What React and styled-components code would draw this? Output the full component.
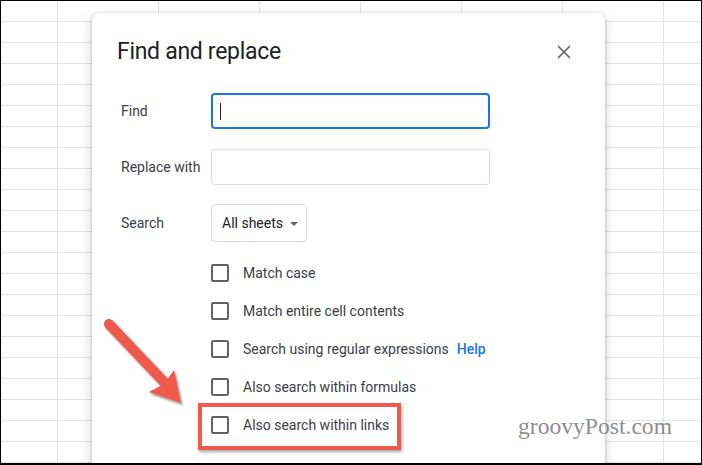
import React from 'react'
import styled, { createGlobalStyle } from 'styled-components'

const GlobalStyle = createGlobalStyle`
  html, body {
    margin: 0;
    padding: 0;
    background: #fff;
  }
  body {
    font-family: Roboto, "Liberation Sans", Arial, sans-serif;
  }
`

const Sheet = styled.div`
  position: relative;
  width: 702px;
  height: 465px;
  box-sizing: border-box;
  border: 1px solid #000;
  border-bottom-width: 2px;
  overflow: hidden;
  background-color: #fff;
  background-image: linear-gradient(#e3e3e3 1px, transparent 1px),
    linear-gradient(90deg, #e3e3e3 1px, transparent 1px);
  background-size: 101px 21px;
  background-position: 56px 20px;
`

const Dialog = styled.section`
  position: absolute;
  left: 91px;
  top: 12px;
  width: 513px;
  bottom: -20px;
  box-sizing: border-box;
  padding: 23px 25px 0 25px;
  background: #fff;
  border-radius: 8px;
  box-shadow: 0 1px 3px rgba(60, 64, 67, 0.3), 0 4px 8px 3px rgba(60, 64, 67, 0.15);
`

const Header = styled.header`
  display: flex;
  align-items: center;
  justify-content: space-between;
  height: 32px;
`

const Title = styled.h1`
  margin: 0;
  font-size: 23px;
  line-height: 32px;
  font-weight: 400;
  letter-spacing: -0.3px;
  color: #202124;
`

const CloseButton = styled.button`
  width: 32px;
  height: 32px;
  padding: 0;
  border: 0;
  background: transparent;
  display: flex;
  align-items: center;
  justify-content: center;
  color: #5f6368;
`

const Form = styled.div`
  margin-top: 25px;
  padding-left: 4px;
`

const FieldRow = styled.div`
  display: flex;
  align-items: center;
  height: 36px;

  & + & {
    margin-top: 20px;
  }
`

const Label = styled.label`
  width: 90px;
  flex: none;
  font-size: 14px;
  color: #3c4043;
`

const TextBox = styled.div`
  width: 279px;
  height: 36px;
  box-sizing: border-box;
  display: flex;
  align-items: center;
  padding-left: ${p => (p.$focused ? 7 : 8)}px;
  border: ${p => (p.$focused ? '2px solid #1a73e8' : '1px solid #dadce0')};
  border-radius: 4px;
  background: #fff;
`

const Caret = styled.span`
  width: 1px;
  height: 17px;
  background: #202124;
`

const Select = styled.div`
  height: 38px;
  box-sizing: border-box;
  display: inline-flex;
  align-items: center;
  gap: 7px;
  padding: 0 8px 0 10px;
  border: 1px solid #dadce0;
  border-radius: 4px;
  font-size: 14px;
  color: #202124;
`

const DropArrow = styled.span`
  width: 0;
  height: 0;
  border-left: 4px solid transparent;
  border-right: 4px solid transparent;
  border-top: 4px solid #5f6368;
  margin-top: 1px;
`

const Options = styled.ul`
  list-style: none;
  margin: 13px 0 0 90px;
  padding: 0;
`

const Option = styled.li`
  display: flex;
  align-items: center;
  height: 38px;
  gap: 14px;
  font-size: 14px;
  color: #3c4043;
`

const Box = styled.span`
  width: 18px;
  height: 18px;
  box-sizing: border-box;
  border: 2px solid #5f6368;
  border-radius: 2px;
  flex: none;
`

const HelpLink = styled.a`
  margin-left: -6px;
  color: #1a73e8;
  font-weight: 500;
  text-decoration: none;
`

const Highlight = styled.div`
  position: absolute;
  left: 197px;
  top: 402px;
  width: 203px;
  height: 47px;
  box-sizing: border-box;
  border: 4px solid #f05a4b;
  box-shadow: 1px 2px 3px rgba(0, 0, 0, 0.35);
`

const Pointer = styled.svg`
  position: absolute;
  left: 95px;
  top: 310px;
  overflow: visible;
`

const Watermark = styled.div`
  position: absolute;
  left: 517px;
  top: 413px;
  font-family: "Liberation Serif", "Times New Roman", serif;
  font-size: 23.6px;
  line-height: 24px;
  color: rgba(110, 110, 110, 0.8);
`

const options = [
  'Match case',
  'Match entire cell contents',
  'Search using regular expressions',
  'Also search within formulas',
  'Also search within links',
]

export default function App() {
  return (
    <>
      <GlobalStyle />
      <Sheet>
        <Dialog>
          <Header>
            <Title>Find and replace</Title>
            <CloseButton aria-label="Close">
              <svg width="14" height="14" viewBox="0 0 14 14">
                <path d="M1 1 L13 13 M13 1 L1 13" stroke="currentColor" strokeWidth="1.6" fill="none" />
              </svg>
            </CloseButton>
          </Header>
          <Form>
            <FieldRow>
              <Label>Find</Label>
              <TextBox $focused>
                <Caret />
              </TextBox>
            </FieldRow>
            <FieldRow>
              <Label>Replace with</Label>
              <TextBox />
            </FieldRow>
            <FieldRow>
              <Label>Search</Label>
              <Select>
                All sheets
                <DropArrow />
              </Select>
            </FieldRow>
            <Options>
              {options.map(text => (
                <Option key={text}>
                  <Box />
                  {text}
                  {text.startsWith('Search using') && <HelpLink href="#">Help</HelpLink>}
                </Option>
              ))}
            </Options>
          </Form>
        </Dialog>
        <Highlight />
        <Pointer width="100" height="100" viewBox="0 0 100 100">
          <defs>
            <filter id="arrowShadow" x="-20%" y="-20%" width="150%" height="150%">
              <feDropShadow dx="1.5" dy="2" stdDeviation="1.2" floodColor="#000" floodOpacity="0.45" />
            </filter>
          </defs>
          <g filter="url(#arrowShadow)" fill="#f05a4b">
            <line x1="13" y1="13" x2="68" y2="71" stroke="#f05a4b" strokeWidth="10" strokeLinecap="round" />
            <polygon points="85,92 53,81 68,73 78,59" />
          </g>
        </Pointer>
        <Watermark>groovyPost.com</Watermark>
      </Sheet>
    </>
  )
}
